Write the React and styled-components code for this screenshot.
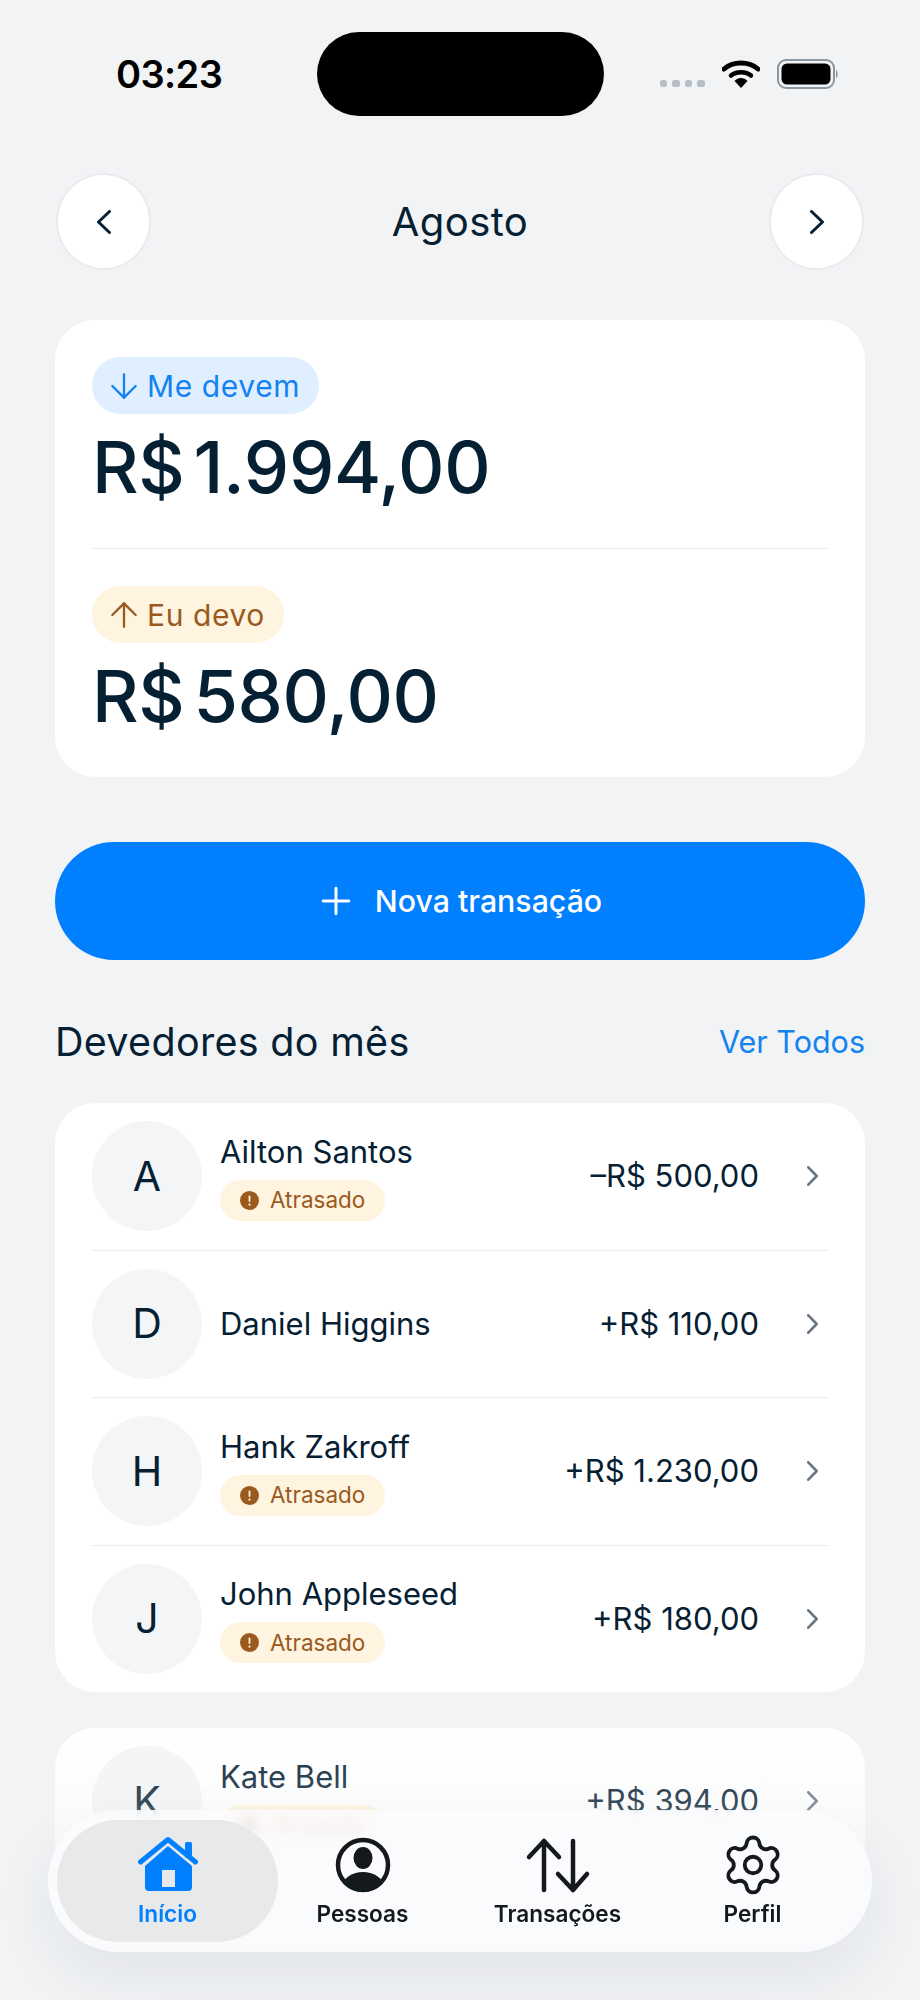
import React from "react";
import styled, { createGlobalStyle } from "styled-components";
import { ArrowDown, ArrowUp, Plus, Settings } from "lucide-react";

const DISPLAY = `"Inter", "Liberation Sans", sans-serif`;
const UI = `"Inter", "Liberation Sans", sans-serif`;
const INK = "#062033";
const BG = "#F1F3F5";
const BLUE = "#007FFF";

const Global = createGlobalStyle`
  html, body { margin: 0; padding: 0; background: ${BG}; }
  * { box-sizing: border-box; }
`;

const Page = styled.div`
  position: relative;
  width: 920px;
  height: 2000px;
  overflow: hidden;
  background: ${BG};
  color: ${INK};
  font-family: ${DISPLAY};
`;

const StatusBar = styled.div`
  display: grid;
  grid-template-columns: 1fr 287px 1fr;
  align-items: center;
  padding: 32px 0 0;
  height: 116px;
`;
const Time = styled.div`
  padding-left: 116px;
  font: 600 38px/40px ${UI};
  letter-spacing: -0.6px;
  color: #000;
`;
const Island = styled.div`
  justify-self: center;
  width: 287px;
  height: 84px;
  border-radius: 42px;
  background: #000;
`;
const StatusIcons = styled.div`
  display: flex;
  align-items: center;
  padding-left: 56px;
  gap: 17px;
`;
const Dots = styled.div`
  display: flex;
  gap: 5px;
  align-self: flex-end;
  margin-bottom: 2px;
`;
const Dot = styled.span`
  width: 7.5px;
  height: 7.5px;
  border-radius: 2.5px;
  background: #b6bfc6;
`;
const Svg = styled.svg`
  display: block;
  flex: none;
`;

const Content = styled.div`
  padding: 0 55px;
`;
const MonthBar = styled.header`
  display: flex;
  align-items: center;
  justify-content: space-between;
  margin-top: 57px;
  padding: 0 1px;
`;
const RoundButton = styled.button`
  display: flex;
  align-items: center;
  justify-content: center;
  width: 95px;
  height: 97px;
  padding: 0;
  border-radius: 50%;
  border: 2px solid #e9ebee;
  background: #fff;
  color: ${INK};
`;
const Month = styled.h1`
  margin: 0;
  font: 400 40px/48px ${DISPLAY};
  letter-spacing: 0.4px;
`;

const Card = styled.section`
  margin-top: ${(p) => p.$top}px;
  background: #fff;
  border-radius: 40px;
  padding: ${(p) => p.$pad || "0 37px"};
`;
const Pill = styled.div`
  display: inline-flex;
  align-items: center;
  gap: 3px;
  height: 57px;
  padding: 0 19px 0 12px;
  border-radius: 29px;
  font: 400 30px/1 ${DISPLAY};
  letter-spacing: 0.6px;
  background: ${(p) => (p.$tone === "in" ? "#DFEFFF" : "#FFF4DF")};
  color: ${(p) => (p.$tone === "in" ? "#1482F0" : "#9A5A1E")};
`;
const Amount = styled.div`
  margin-top: 11px;
  padding-bottom: ${(p) => p.$bottom || 0}px;
  font: 500 72px/84px ${DISPLAY};
  word-spacing: -0.14em;
  letter-spacing: -0.3px;
  color: ${INK};
`;
const Rule = styled.hr`
  margin: ${(p) => p.$m || 0};
  border: 0;
  height: 1px;
  background: #ebedf0;
`;
const NewButton = styled.button`
  display: flex;
  align-items: center;
  justify-content: center;
  gap: 17px;
  width: 100%;
  height: 118px;
  margin-top: 65px;
  padding: 0 4px 0 0;
  border: 0;
  border-radius: 59px;
  background: ${BLUE};
  color: #fff;
  font: 500 30.3px/1 ${DISPLAY};
`;
const SectionRow = styled.div`
  display: flex;
  align-items: center;
  justify-content: space-between;
  margin-top: 57px;
  height: 50px;
`;
const SectionTitle = styled.h2`
  margin: 0;
  font: 400 39.5px/50px ${DISPLAY};
  letter-spacing: 0.3px;
`;
const SeeAll = styled.a`
  font: 400 30.5px/50px ${DISPLAY};
  color: #1482F0;
`;
const Row = styled.div`
  display: flex;
  align-items: center;
  height: 146.5px;
`;
const Avatar = styled.div`
  flex: none;
  display: flex;
  align-items: center;
  justify-content: center;
  width: 110px;
  height: 110px;
  border-radius: 50%;
  background: #f4f5f7;
  font: 400 41px/1 ${DISPLAY};
`;
const Info = styled.div`
  flex: 1;
  display: flex;
  flex-direction: column;
  align-items: flex-start;
  gap: 8px;
  padding-left: 18px;
`;
const Name = styled.div`
  font: 400 31px/40px ${DISPLAY};
`;
const Late = styled.div`
  display: inline-flex;
  align-items: center;
  gap: 11px;
  height: 41px;
  padding: 0 20px;
  border-radius: 21px;
  background: #FFF4DF;
  color: #9A5A1E;
  font: 400 22.5px/1 ${DISPLAY};
`;
const Value = styled.div`
  font: 400 31px/40px ${UI};
`;
const ChevronSlot = styled.div`
  display: flex;
  justify-content: flex-end;
  width: 69px;
  padding-right: 10px;
`;
const Spacer = styled.div`
  height: 200px;
`;

const Fade = styled.div`
  position: absolute;
  left: 0;
  right: 0;
  top: 1700px;
  height: 300px;
  pointer-events: none;
  background: linear-gradient(
    to bottom,
    rgba(241, 243, 245, 0) 0%,
    rgba(241, 243, 245, 0.22) 35%,
    rgba(241, 243, 245, 0.7) 60%,
    rgba(241, 243, 245, 1) 85%
  );
`;
const TabBar = styled.nav`
  position: absolute;
  left: 48px;
  top: 1810px;
  width: 824px;
  height: 142px;
  display: grid;
  grid-template-columns: repeat(4, 195px);
  padding: 10px 0 10px 22px;
  border-radius: 71px;
  background: rgba(251, 252, 254, 0.84);
  backdrop-filter: blur(6px);
  box-shadow: 0 24px 60px rgba(30, 40, 50, 0.07);
`;
const Tab = styled.div`
  position: relative;
  display: flex;
  flex-direction: column;
  align-items: center;
  color: ${(p) => (p.$active ? BLUE : "#14191e")};
  font: 600 22.6px/28px ${UI};
  &::before {
    content: "";
    display: ${(p) => (p.$active ? "block" : "none")};
    position: absolute;
    inset: 0 -13px;
    border-radius: 61px;
    background: #e8e9eb;
  }
`;
const TabIcon = styled.div`
  position: relative;
  height: 66px;
  margin-top: 12px;
  display: flex;
  align-items: center;
  justify-content: center;
`;
const TabLabel = styled.span`
  position: relative;
  margin-top: 2px;
`;

const Chevron = ({ dir = "right", size = 24, w = 14, color = "currentColor", stroke = 3 }) => (
  <Svg width={w} height={size} viewBox={`0 0 ${w} ${size}`} fill="none">
    <polyline
      points={
        dir === "right"
          ? `${stroke / 2},${stroke / 2} ${w - stroke / 2},${size / 2} ${stroke / 2},${size - stroke / 2}`
          : `${w - stroke / 2},${stroke / 2} ${stroke / 2},${size / 2} ${w - stroke / 2},${size - stroke / 2}`
      }
      stroke={color}
      strokeWidth={stroke}
      strokeLinecap="round"
      strokeLinejoin="round"
    />
  </Svg>
);

const Wifi = () => (
  <Svg width="38" height="28" viewBox="0 0 38 28" fill="none">
    <path d="M2 9 C11 1 27 1 36 9" stroke="#000" strokeWidth="5" strokeLinecap="round" />
    <path d="M9 15.5 C14 11 24 11 29 15.5" stroke="#000" strokeWidth="4.5" strokeLinecap="round" />
    <path d="M12.5 21 C16 17 22 17 25.5 21 L19 28 Z" fill="#000" />
  </Svg>
);
const Battery = () => (
  <Svg width="62" height="30" viewBox="0 0 62 30" fill="none">
    <rect x="1" y="1" width="56" height="28" rx="8" stroke="#8c969e" strokeWidth="2" />
    <rect x="4.5" y="4.5" width="49" height="21" rx="5.5" fill="#000" />
    <path d="M59 11 C61 12 61.5 18 59 19 Z" fill="#8c969e" />
  </Svg>
);

const HomeIcon = () => (
  <Svg width="60" height="60" viewBox="0 0 60 60" fill="none">
    <rect x="47" y="7" width="7" height="16" rx="1.5" fill={BLUE} />
    <path
      fillRule="evenodd"
      d="M30 11 L54 31 V52 a4 4 0 0 1 -4 4 H11 a4 4 0 0 1 -4 -4 V31 Z M24 35 V52 H37 V35 Z"
      fill={BLUE}
    />
    <polyline points="2.5,27 30,4.5 57.5,27" stroke={BLUE} strokeWidth="5" strokeLinecap="round" strokeLinejoin="round" />
  </Svg>
);
const PersonIcon = () => (
  <Svg width="60" height="60" viewBox="0 0 60 60" fill="none">
    <defs>
      <clipPath id="person-clip">
        <circle cx="30" cy="30" r="27" />
      </clipPath>
    </defs>
    <circle cx="30" cy="30" r="25" stroke="#14191e" strokeWidth="4.5" />
    <ellipse cx="30" cy="23" rx="9.5" ry="11" fill="#14191e" />
    <path d="M8 54 C10 42 20 37 30 37 C40 37 50 42 52 54 L30 60 Z" fill="#14191e" clipPath="url(#person-clip)" />
  </Svg>
);
const SwapIcon = () => (
  <Svg width="66" height="60" viewBox="0 0 66 60" fill="none" stroke="#14191e" strokeWidth="4.5" strokeLinecap="round" strokeLinejoin="round">
    <path d="M19 55 V6 M4 22 L19 6 L34 22" />
    <path d="M48 6 V55 M33 39 L48 55 L62 39" />
  </Svg>
);

const people1 = [
  { i: "A", n: "Ailton Santos", v: "–R$ 500,00", late: true },
  { i: "D", n: "Daniel Higgins", v: "+R$ 110,00" },
  { i: "H", n: "Hank Zakroff", v: "+R$ 1.230,00", late: true },
  { i: "J", n: "John Appleseed", v: "+R$ 180,00", late: true },
];

const AlertDot = () => (
  <Svg width="19" height="19" viewBox="0 0 19 19">
    <circle cx="9.5" cy="9.5" r="9.5" fill="#9A5A1E" />
    <rect x="8.6" y="4.5" width="1.8" height="6.5" rx="0.9" fill="#FFF4DF" />
    <circle cx="9.5" cy="13.6" r="1.1" fill="#FFF4DF" />
  </Svg>
);

const PersonRow = ({ p }) => (
  <Row>
    <Avatar>{p.i}</Avatar>
    <Info>
      <Name>{p.n}</Name>
      {p.late && (
        <Late>
          <AlertDot />
          Atrasado
        </Late>
      )}
    </Info>
    <Value>{p.v}</Value>
    <ChevronSlot>
      <Chevron size={20} w={11} color="#6b7680" stroke={2.6} />
    </ChevronSlot>
  </Row>
);

export default function App() {
  return (
    <Page>
      <Global />
      <StatusBar>
        <Time>03:23</Time>
        <Island />
        <StatusIcons>
          <Dots>
            <Dot /><Dot /><Dot /><Dot />
          </Dots>
          <Wifi />
          <Battery />
        </StatusIcons>
      </StatusBar>
      <Content>
        <MonthBar>
          <RoundButton aria-label="anterior"><Chevron dir="left" /></RoundButton>
          <Month>Agosto</Month>
          <RoundButton aria-label="próximo"><Chevron /></RoundButton>
        </MonthBar>
        <Card $top={50} $pad="37px 37px 0">
          <Pill $tone="in"><ArrowDown size={40} strokeWidth={1.4} />Me devem</Pill>
          <Amount>R$ 1.994,00</Amount>
          <Rule $m="39px 0 37px" />
          <Pill $tone="out"><ArrowUp size={40} strokeWidth={1.4} />Eu devo</Pill>
          <Amount $bottom={39}>R$ 580,00</Amount>
        </Card>
        <NewButton><Plus size={44} strokeWidth={1.6} />Nova transação</NewButton>
        <SectionRow>
          <SectionTitle>Devedores do mês</SectionTitle>
          <SeeAll>Ver Todos</SeeAll>
        </SectionRow>
        <Card $top={36}>
          {people1.map((p, k) => (
            <React.Fragment key={p.i}>
              {k > 0 && <Rule />}
              <PersonRow p={p} />
            </React.Fragment>
          ))}
        </Card>
        <Card $top={36}>
          <PersonRow p={{ i: "K", n: "Kate Bell", v: "+R$ 394,00", late: true }} />
          <Rule />
          <Spacer />
        </Card>
      </Content>
      <Fade />
      <TabBar>
        <Tab $active>
          <TabIcon><HomeIcon /></TabIcon>
          <TabLabel>Início</TabLabel>
        </Tab>
        <Tab>
          <TabIcon><PersonIcon /></TabIcon>
          <TabLabel>Pessoas</TabLabel>
        </Tab>
        <Tab>
          <TabIcon><SwapIcon /></TabIcon>
          <TabLabel>Transações</TabLabel>
        </Tab>
        <Tab>
          <TabIcon><Settings size={66} strokeWidth={1.4} /></TabIcon>
          <TabLabel>Perfil</TabLabel>
        </Tab>
      </TabBar>
    </Page>
  );
}
